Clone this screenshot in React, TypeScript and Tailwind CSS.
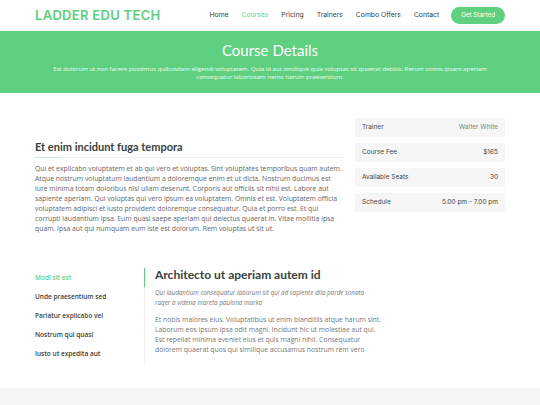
import React from "react";

const nav = ["Home", "Courses", "Pricing", "Trainers", "Combo Offers", "Contact"];

const info = [
  { label: "Trainer", value: "Walter White", accent: true },
  { label: "Course Fee", value: "$165" },
  { label: "Available Seats", value: "30" },
  { label: "Schedule", value: "5.00 pm - 7.00 pm" },
];

const tabs = [
  "Modi sit est",
  "Unde praesentium sed",
  "Pariatur explicabo vel",
  "Nostrum qui quasi",
  "Iusto ut expedita aut",
];

const poppins = { fontFamily: "Inter, 'Noto Sans', sans-serif" };

export default function App() {
  return (
    <div className="min-h-[405px] bg-white font-['Open_Sans',sans-serif]">
      <header className="flex h-[31px] items-center justify-between px-[35px]">
        <div
          className="text-[13px] font-semibold tracking-[0.3px] text-[#5fcf80]"
          style={poppins}
        >
          LADDER EDU TECH
        </div>
        <nav className="flex items-center text-[6.8px] text-[#37423b]" style={poppins}>
          {nav.map((n, i) => (
            <span
              key={n}
              className={`${i === 0 ? "" : "ml-[13px]"} ${n === "Courses" ? "text-[#5fcf80]" : ""}`}
            >
              {n}
            </span>
          ))}
          <span className="ml-[12px] rounded-full bg-[#5fcf80] px-[10px] py-[4px] text-[6.3px] text-white">
            Get Started
          </span>
        </nav>
      </header>

      <section className="flex h-[62px] flex-col items-center justify-center bg-[#5fcf80] text-white">
        <h1 className="font-['Lato',sans-serif] text-[15px] leading-none">Course Details</h1>
        <p className="mt-[7px] w-[450px] text-center text-[6.1px] leading-[8px] text-white/90">
          Est dolorum ut non facere possimus quibusdam eligendi voluptatem. Quia id aut similique quia voluptas sit quaerat debitis. Rerum omnis ipsam aperiam consequatur laboriosam nemo harum praesentium.
        </p>
      </section>

      <section className="mx-[35px] flex gap-[11px] pt-[25px]">
        <div className="w-[309px] pt-[23px]">
          <h3 className="font-['Lato',sans-serif] text-[11px] font-bold leading-[12px] text-[#37423b]">
            Et enim incidunt fuga tempora
          </h3>
          <div className="mt-[4px] flex h-[1px] bg-[#eef0ef]">
            <div className="w-[25px] bg-[#c9ebd3]" />
          </div>
          <p className="mt-[6px] text-[6.85px] leading-[10px] text-[#666]">
            Qui et explicabo voluptatem et ab qui vero et voluptas. Sint voluptates temporibus quam autem. Atque nostrum voluptatum laudantium a doloremque enim et ut dicta. Nostrum ducimus est iure minima totam doloribus nisi ullam deserunt. Corporis aut officiis sit nihil est. Labore aut sapiente aperiam. Qui voluptas qui vero ipsum ea voluptatem. Omnis et est. Voluptatem officia voluptatem adipisci et iusto provident doloremque consequatur. Quia et porro est. Et qui corrupti laudantium ipsa. Eum quasi saepe aperiam qui delectus quaerat in. Vitae mollitia ipsa quam. Ipsa aut qui numquam eum iste est dolorum. Rem voluptas ut sit ut.
          </p>
        </div>
        <div className="flex w-[150px] flex-col gap-[6px]" style={poppins}>
          {info.map((r) => (
            <div
              key={r.label}
              className="flex h-[19px] items-center justify-between bg-[#f6f6f6] px-[7px] text-[6.5px] text-[#444]"
            >
              <span>{r.label}</span>
              <span className={r.accent ? "text-[#6b8f76]" : ""}>{r.value}</span>
            </div>
          ))}
        </div>
      </section>

      <section className="mx-[35px] mt-[34px] flex">
        <ul className="w-[109px]">
          {tabs.map((t, i) => (
            <li
              key={t}
              className={`flex h-[19px] items-center text-[6.5px] font-semibold ${i === 0 ? "text-[#5fcf80]" : "text-[#37423b]"}`}
            >
              {t}
            </li>
          ))}
        </ul>
        <div className="flex">
          <div className="flex w-[1px] flex-col bg-[#eeeeee]">
            <div className="h-[19px] bg-[#5fcf80]" />
          </div>
          <div className="w-[240px] pl-[10px]">
            <h3 className="font-['Lato',sans-serif] text-[12px] font-bold leading-[14px] text-[#37423b]">
              Architecto ut aperiam autem id
            </h3>
            <p className="mt-[6px] w-[225px] text-[6.3px] italic leading-[10px] text-[#777]">
              Qui laudantium consequatur laborum sit qui ad sapiente dila parde sonata raqer a videna mareta paulona marka
            </p>
            <p className="mt-[7px] text-[6.8px] leading-[10px] text-[#777]">
              Et nobis maiores eius. Voluptatibus ut enim blanditiis atque harum sint. Laborum eos ipsum ipsa odit magni. Incidunt hic ut molestiae aut qui. Est repellat minima eveniet eius et quis magni nihil. Consequatur dolorem quaerat quos qui similique accusamus nostrum rem vero
            </p>
          </div>
        </div>
      </section>

      <footer className="mt-[25px] h-[40px] bg-[#f7f7f7]" />
    </div>
  );
}
